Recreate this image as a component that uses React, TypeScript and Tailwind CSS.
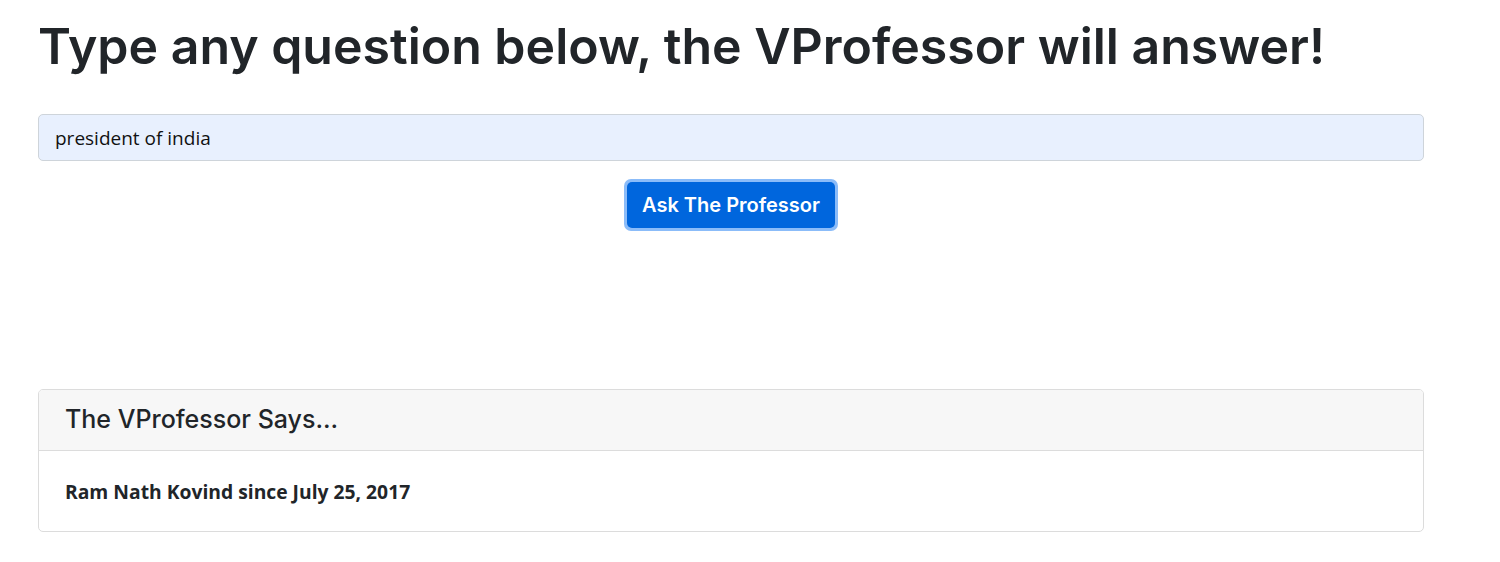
import React from "react";

export default function App() {
  return (
    <div className="min-h-[562px] bg-white">
      <div className="ml-[38px] w-[1386px] pt-[14px]" style={{ fontFamily: "Inter, 'Liberation Sans', sans-serif" }}>
        <h1 className="text-[50px] font-semibold leading-[64px] text-[#212529] tracking-[0px]">
          Type any question below, the VProfessor will answer!
        </h1>
        <div className="mt-[36px] h-[47px] w-full rounded-[5px] border border-[#ced4da] bg-[#e8f0fe] pl-[16px] flex items-center">
          <span className="text-[19px] text-[#111] leading-none mt-[2px]" style={{ fontFamily: "'Open Sans', 'Noto Sans', sans-serif" }}>president of india</span>
        </div>
        <div className="mt-[18px] flex justify-center">
          <div className="flex rounded-[7px] bg-[#8bbcf9] p-[3px]">
            <button className="flex h-[46px] w-[208px] items-center justify-center rounded-[5px] bg-[#0066dd] text-[20px] font-semibold text-white">
              Ask The Professor
            </button>
          </div>
        </div>
        <div className="mt-[158px] rounded-[5px] border border-[#dcdcdc] overflow-hidden">
          <div className="h-[61px] bg-[#f7f7f7] border-b border-[#dcdcdc] pl-[26px] flex items-center">
            <span className="text-[25px] font-medium text-[#212529]">The VProfessor Says...</span>
          </div>
          <div className="h-[80px] pl-[26px] flex items-center">
            <span className="text-[19.3px] font-bold text-[#212529] mt-[2px]" style={{ fontFamily: "'Open Sans', 'Noto Sans', sans-serif" }}>Ram Nath Kovind since July 25, 2017</span>
          </div>
        </div>
      </div>
    </div>
  );
}
